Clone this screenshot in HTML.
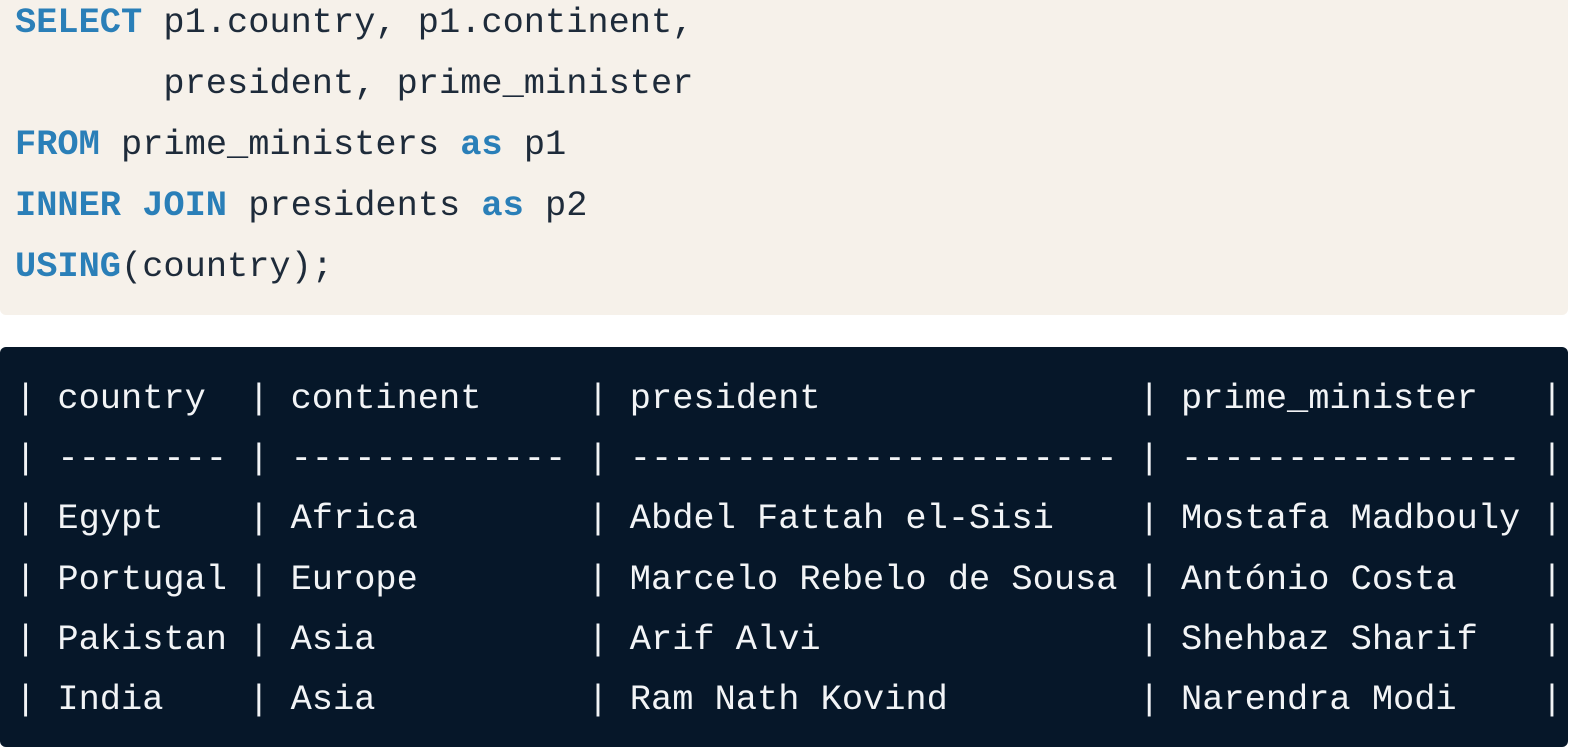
<!DOCTYPE html>
<html><head><meta charset="utf-8"><style>
html,body{margin:0;padding:0;background:#fff;width:1572px;height:730px;overflow:hidden}
pre{margin:0;font-family:"Liberation Mono","DejaVu Sans Mono",monospace;font-size:35.35px;white-space:pre}
.top{position:absolute;left:0;top:-20px;width:1568px;height:335px;background:#f6f1ea;border-radius:6px}
.top pre{position:absolute;left:15px;top:13px;line-height:61px;color:#1e2b3a}
.k{color:#2a7fb8;font-weight:bold}
.bot{position:absolute;left:0;top:347px;width:1568px;height:400px;background:#061729;border-radius:6px}
.bot pre{position:absolute;left:15px;top:22px;line-height:60.2px;color:#f2f4f6}
</style></head><body>
<div class="top"><pre><span class="k">SELECT</span> p1.country, p1.continent,
       president, prime_minister
<span class="k">FROM</span> prime_ministers <span class="k">as</span> p1
<span class="k">INNER JOIN</span> presidents <span class="k">as</span> p2
<span class="k">USING</span>(country);</pre></div>
<div class="bot"><pre>| country  | continent     | president               | prime_minister   |
| -------- | ------------- | ----------------------- | ---------------- |
| Egypt    | Africa        | Abdel Fattah el-Sisi    | Mostafa Madbouly |
| Portugal | Europe        | Marcelo Rebelo de Sousa | António Costa    |
| Pakistan | Asia          | Arif Alvi               | Shehbaz Sharif   |
| India    | Asia          | Ram Nath Kovind         | Narendra Modi    |</pre></div>
</body></html>
